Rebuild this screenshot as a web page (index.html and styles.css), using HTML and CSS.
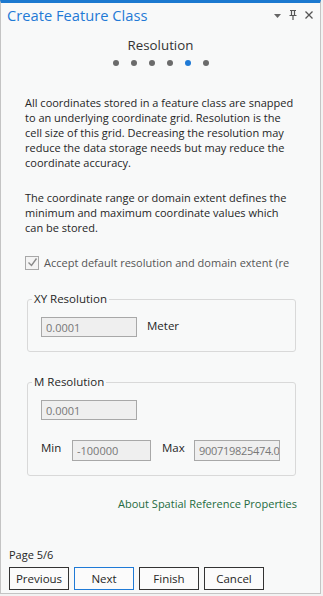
FILE: index.html
```html
<!DOCTYPE html>
<html lang="en">
<head>
    <meta charset="UTF-8">
    <meta name="viewport" content="width=device-width, initial-scale=1.0">
    <title>Create Feature Class</title>
    <link rel="stylesheet" href="styles.css">
</head>
<body>

    <div class="pane">
        <!-- Pane header -->
        <div class="pane-header">
            <span class="pane-title">Create Feature Class</span>
            <div class="pane-tools">
                <svg class="tool" width="9" height="9" viewBox="0 0 9 9"><path d="M1 3h7L4.5 7z" fill="#666"/></svg>
                <svg class="tool" width="10" height="12" viewBox="0 0 10 12"><path d="M2 1.5h6M3.5 1.5v5M6.5 1.5v5M1.5 6.5h7M5 6.5V11" stroke="#555" stroke-width="1.2" fill="none"/></svg>
                <svg class="tool" width="10" height="10" viewBox="0 0 10 10"><path d="M1.5 1.5l7 7M8.5 1.5l-7 7" stroke="#555" stroke-width="1.3" fill="none"/></svg>
            </div>
        </div>

        <!-- Wizard step -->
        <div class="step">
            <h2 class="step-title">Resolution</h2>
            <div class="step-dots">
                <span class="dot"></span>
                <span class="dot"></span>
                <span class="dot"></span>
                <span class="dot"></span>
                <span class="dot active"></span>
                <span class="dot"></span>
            </div>
        </div>

        <div class="content">
            <p>All coordinates stored in a feature class are snapped to an underlying coordinate grid. Resolution is the cell size of this grid. Decreasing the resolution may reduce the data storage needs but may reduce the coordinate accuracy.</p>
            <p>The coordinate range or domain extent defines the minimum and maximum coordinate values which can be stored.</p>

            <label class="check-row">
                <span class="check-box">
                    <svg width="11" height="11" viewBox="0 0 11 11"><path d="M1.5 5.5l3 3 5-7" stroke="#8a8a8a" stroke-width="1.4" fill="none"/></svg>
                </span>
                <span class="check-text">Accept default resolution and domain extent (re</span>
            </label>

            <fieldset class="group">
                <legend>XY Resolution</legend>
                <div class="field-row">
                    <input class="field" type="text" value="0.0001" disabled>
                    <span class="unit">Meter</span>
                </div>
            </fieldset>

            <fieldset class="group">
                <legend>M Resolution</legend>
                <div class="field-row">
                    <input class="field" type="text" value="0.0001" disabled>
                </div>
                <div class="field-row range-row">
                    <span class="range-label">Min</span>
                    <input class="field min-field" type="text" value="-100000" disabled>
                    <span class="range-label max-label">Max</span>
                    <input class="field max-field" type="text" value="900719825474.0991" disabled>
                </div>
            </fieldset>

            <div class="help">
                <a class="help-link" href="#">About Spatial Reference Properties</a>
            </div>
        </div>

        <!-- Footer -->
        <div class="pane-footer">
            <div class="page-num">Page 5/6</div>
            <div class="buttons">
                <button class="btn">Previous</button>
                <button class="btn primary">Next</button>
                <button class="btn">Finish</button>
                <button class="btn">Cancel</button>
            </div>
        </div>
    </div>

</body>
</html>
```

FILE: styles.css
```css
body {
    margin: 0;
    background-color: #f2f2f2;
    font-family: "Open Sans", "Noto Sans", sans-serif;
    font-size: 11px;
    color: #262626;
}
.pane {
    width: 319px;
    height: 590px;
    border: 1px solid #c4c4c4;
    border-top: 3px solid #1b79d0;
    background: #f8f9f9;
    display: flex;
    flex-direction: column;
}

/* Header */
.pane-header {
    height: 24px;
    display: flex;
    align-items: center;
    justify-content: space-between;
    padding: 0 6px 0 6px;
}
.pane-title {
    font-size: 14.7px;
    color: #1f7ad6;
}
.pane-tools {
    display: flex;
    align-items: center;
    gap: 6px;
}
.tool {
    display: block;
}

/* Step indicator */
.step {
    text-align: center;
}
.step-title {
    margin: 9px 0 0;
    font-size: 13.3px;
    font-weight: normal;
    line-height: 18px;
    color: #333;
}
.step-dots {
    display: flex;
    justify-content: center;
    gap: 12px;
    margin-top: 6px;
}
.dot {
    width: 6px;
    height: 6px;
    border-radius: 50%;
    background: #6b6b6b;
}
.dot.active {
    background: #1f7ad6;
}

/* Content */
.content {
    padding: 29px 23px 0 24px;
}
.content p {
    margin: 0 0 20px;
    line-height: 15px;
}
.check-row {
    display: flex;
    align-items: center;
    height: 15px;
    gap: 5px;
    white-space: nowrap;
    color: #555;
}
.check-box {
    flex: none;
    width: 12px;
    height: 12px;
    border: 1px solid #a8a8a8;
    background: #f4f4f4;
    display: flex;
    align-items: center;
    justify-content: center;
}
.check-box svg {
    display: block;
}

.group {
    margin: 21px 1px 0 2px;
    padding: 10px 13px 14px;
    border: 1px solid #d9d9d9;
    border-radius: 3px;
}
.group + .group {
    margin-top: 22px;
}
.group legend {
    padding: 0 2px;
    margin-left: -9px;
    line-height: 16px;
    font-size: 11.5px;
    color: #262626;
}
.field-row {
    display: flex;
    align-items: center;
}
.range-row {
    margin-top: 20px;
}
.field {
    box-sizing: border-box;
    width: 96px;
    height: 20px;
    padding: 0 4px;
    border: 1px solid #a8a8a8;
    background: #efefef;
    color: #777;
    font-family: inherit;
    font-size: 11px;
    margin: 0;
}
.unit {
    margin-left: 10px;
    margin-top: -4px;
    font-size: 11.5px;
}
.range-label {
    width: 31px;
    margin-top: -6px;
    font-size: 11.5px;
}
.max-label {
    width: 32px;
    margin-left: 11px;
}
.min-field {
    width: 79px;
    height: 21px;
}
.max-field {
    width: 86px;
    height: 21px;
    padding-right: 0;
    letter-spacing: -0.3px;
}

.help {
    margin-top: 20px;
    text-align: right;
    line-height: 15px;
}
.help-link {
    color: #246b40;
    text-decoration: none;
}

/* Footer */
.pane-footer {
    margin-top: auto;
    padding: 0 8px 3px 8px;
}
.page-num {
    line-height: 15px;
}
.buttons {
    display: flex;
    gap: 5px;
    margin-top: 5px;
}
.btn {
    width: 60px;
    height: 23px;
    padding: 0;
    border: 1px solid #333;
    background: #fbfbfb;
    color: #262626;
    font-family: inherit;
    font-size: 11.5px;
    cursor: pointer;
}
.btn.primary {
    border-color: #1f7ad6;
}
```
